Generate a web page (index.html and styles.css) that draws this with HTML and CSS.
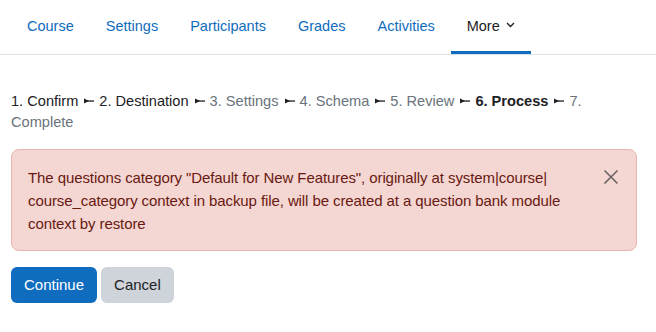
FILE: index.html
```html
<!DOCTYPE html>
<html lang="en">
<head>
  <meta charset="UTF-8">
  <title>Restore - Process</title>
  <link rel="stylesheet" href="styles.css">
</head>
<body>
  <nav class="secondary-nav">
    <ul class="nav-tabs">
      <li><a href="#" class="nav-link">Course</a></li>
      <li><a href="#" class="nav-link">Settings</a></li>
      <li><a href="#" class="nav-link">Participants</a></li>
      <li><a href="#" class="nav-link">Grades</a></li>
      <li><a href="#" class="nav-link">Activities</a></li>
      <li>
        <a href="#" class="nav-link active">More
          <svg class="chevron" width="9" height="6" viewBox="0 0 9 6"><path d="M1 1 L4.5 4.5 L8 1" fill="none" stroke="currentColor" stroke-width="1.4"/></svg>
        </a>
      </li>
    </ul>
  </nav>

  <main class="page">
    <!-- separators are svg arrows; no whitespace between items, margins do the spacing -->
    <div class="progress"><span class="step done">1. Confirm</span><span class="sep"><svg width="10" height="6" viewBox="0 0 10 6"><path d="M0 0.5 L5 3 L0 5.5 Z" fill="currentColor"/><rect x="0" y="2.4" width="10" height="1.3" fill="currentColor"/></svg></span><span class="step done">2. Destination</span><span class="sep"><svg width="10" height="6" viewBox="0 0 10 6"><path d="M0 0.5 L5 3 L0 5.5 Z" fill="currentColor"/><rect x="0" y="2.4" width="10" height="1.3" fill="currentColor"/></svg></span><span class="step">3. Settings</span><span class="sep"><svg width="10" height="6" viewBox="0 0 10 6"><path d="M0 0.5 L5 3 L0 5.5 Z" fill="currentColor"/><rect x="0" y="2.4" width="10" height="1.3" fill="currentColor"/></svg></span><span class="step">4. Schema</span><span class="sep"><svg width="10" height="6" viewBox="0 0 10 6"><path d="M0 0.5 L5 3 L0 5.5 Z" fill="currentColor"/><rect x="0" y="2.4" width="10" height="1.3" fill="currentColor"/></svg></span><span class="step">5. Review</span><span class="sep"><svg width="10" height="6" viewBox="0 0 10 6"><path d="M0 0.5 L5 3 L0 5.5 Z" fill="currentColor"/><rect x="0" y="2.4" width="10" height="1.3" fill="currentColor"/></svg></span><span class="step current">6. Process</span><span class="sep"><svg width="10" height="6" viewBox="0 0 10 6"><path d="M0 0.5 L5 3 L0 5.5 Z" fill="currentColor"/><rect x="0" y="2.4" width="10" height="1.3" fill="currentColor"/></svg></span><span class="step">7. Complete</span></div>

    <div class="alert">
      The questions category "Default for New Features", originally at system|course|
      course_category context in backup file, will be created at a question bank module
      context by restore
      <button class="alert-close" aria-label="Dismiss">
        <svg width="16" height="16" viewBox="0 0 16 16"><path d="M1.5 1.5 L14.5 14.5 M14.5 1.5 L1.5 14.5" stroke="currentColor" stroke-width="1.6" fill="none"/></svg>
      </button>
    </div>

    <div class="buttons">
      <button class="btn btn-primary">Continue</button>
      <button class="btn btn-secondary">Cancel</button>
    </div>
  </main>
</body>
</html>
```

FILE: styles.css
```css
body {
  margin: 0;
  font-family: "Liberation Sans", Arial, sans-serif;
  font-size: 15px;
  color: #1d2125;
  background: #fff;
}

.nav-tabs {
  list-style: none;
  display: flex;
  margin: 0;
  padding: 0 0 0 11px;
  border-bottom: 1px solid #dee2e6;
}

.nav-link {
  display: block;
  padding: 15px 16px 14px;
  font-size: 14.5px;
  line-height: 22px;
  color: #0f6cbf;
  text-decoration: none;
  border-bottom: 3px solid transparent;
}

.nav-link.active {
  color: #1d2125;
  border-bottom-color: #0f6cbf;
}

.chevron {
  margin-left: 2px;
  vertical-align: 3px;
}

.page {
  padding: 36px 19px 0 11px;
}

.progress {
  font-size: 14.6px;
  line-height: 21px;
  color: #6a737b;
}

.progress .done {
  color: #1d2125;
}

.progress .current {
  color: #1d2125;
  font-weight: bold;
}

.sep {
  display: inline-block;
  margin: 0 5px 0 6px;
  color: #1d2125;
  vertical-align: 2px;
  line-height: 0;
}

.alert {
  position: relative;
  margin-top: 16px;
  padding: 16px 60px 15px 16px;
  line-height: 23px;
  letter-spacing: -0.09px;
  color: #691911;
  background: #f4d6d2;
  border: 1px solid #eeb5ae;
  border-radius: 8px;
}

.alert-close {
  position: absolute;
  top: 19px;
  right: 17px;
  padding: 0;
  border: 0;
  background: none;
  color: #6b6365;
  cursor: pointer;
}

.alert-close svg {
  display: block;
}

.buttons {
  display: flex;
  gap: 4px;
  margin-top: 16px;
}

.btn {
  font: inherit;
  line-height: 22px;
  padding: 6px 12px;
  border: 1px solid transparent;
  border-radius: 6px;
  cursor: pointer;
}

.btn-primary {
  background: #0f6cbf;
  color: #fff;
}

.btn-secondary {
  background: #ced4da;
  color: #1d2125;
}
```
